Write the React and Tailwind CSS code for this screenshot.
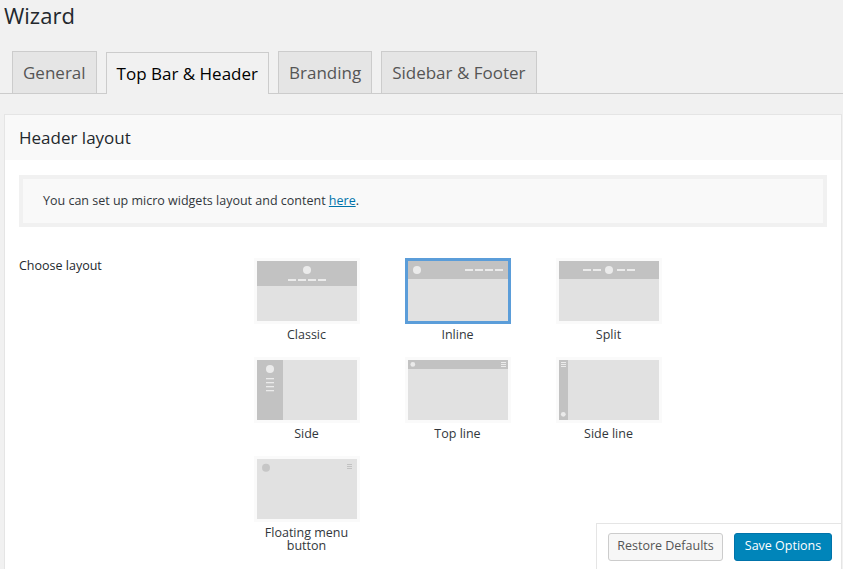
import React from "react";

const DARK = "#c2c2c2";
const LIGHT = "#e1e1e1";
const DOT = "#ebebeb";

function Dashes({ xs, y }) {
  return xs.map((x) => <rect key={x} x={x} y={y} width="8" height="2" fill={DOT} />);
}

function Hamburger({ x, y, color, w = 5 }) {
  return [0, 2, 4].map((d) => (
    <rect key={d} x={x} y={y + d} width={w} height="1" fill={color} />
  ));
}

const thumbs = {
  classic: (
    <>
      <rect x="0" y="0" width="100" height="25" fill={DARK} />
      <circle cx="50" cy="9" r="4" fill={DOT} />
      <Dashes xs={[31, 41, 51, 61]} y={18} />
    </>
  ),
  inline: (
    <>
      <rect x="0" y="0" width="100" height="18" fill={DARK} />
      <circle cx="9" cy="9" r="4" fill={DOT} />
      <Dashes xs={[57, 67, 77, 87]} y={8} />
    </>
  ),
  split: (
    <>
      <rect x="0" y="0" width="100" height="18" fill={DARK} />
      <Dashes xs={[24, 34, 58, 68]} y={8} />
      <circle cx="50" cy="9" r="4" fill={DOT} />
    </>
  ),
  side: (
    <>
      <rect x="0" y="0" width="26" height="60" fill={DARK} />
      <circle cx="13" cy="9" r="4" fill={DOT} />
      {[18, 22, 26, 30].map((y) => (
        <rect key={y} x="9" y={y} width="8" height="1.3" fill={DOT} />
      ))}
    </>
  ),
  topline: (
    <>
      <rect x="0" y="0" width="100" height="9" fill={DARK} />
      <circle cx="4.8" cy="4.4" r="2.4" fill={DOT} />
      <Hamburger x={93} y={2} color={DOT} />
    </>
  ),
  sideline: (
    <>
      <rect x="0" y="0" width="9" height="60" fill={DARK} />
      <Hamburger x={2} y={2} color={DOT} />
      <circle cx="4.3" cy="54.3" r="2.4" fill={DOT} />
    </>
  ),
  floating: (
    <>
      <circle cx="9" cy="8.7" r="4" fill="#c6c6c6" />
      <Hamburger x={90} y={5} color="#c2c2c2" />
    </>
  ),
};

function Thumb({ kind, label, selected }) {
  return (
    <div className="flex flex-col items-center">
      <div
        className={
          selected
            ? "border-[3px] border-[#5b9dd9]"
            : "border-[3px] border-[#fafafa]"
        }
      >
        <svg width="100" height="60" viewBox="0 0 100 60" className="block">
          <rect x="0" y="0" width="100" height="60" fill={LIGHT} />
          {thumbs[kind]}
        </svg>
      </div>
      <div className="mt-[4px] w-[110px] text-center text-[12.5px] leading-[13px] text-[#32373c]">
        {label}
      </div>
    </div>
  );
}

export default function App() {
  return (
    <div
      className="relative h-[569px] w-[843px] overflow-hidden bg-[#f1f1f1] text-[#23282d]"
      style={{ fontFamily: '"Open Sans", "Noto Sans", sans-serif' }}
    >
      <h1 className="pl-[4px] pt-[1px] text-[22px] leading-[29px] text-[#23282d]">Wizard</h1>

      {/* Tabs */}
      <div className="mt-[22px] flex h-[42px] items-end gap-[9px] border-b border-[#ccc] pl-[12px]">
        <div className="flex h-[42px] items-center border border-b-0 border-[#ccc] bg-[#e5e5e5] px-[10px] text-[17px] text-[#555]">
          General
        </div>
        <div className="-mb-px flex h-[42px] items-center border border-b-0 border-[#ccc] bg-[#f1f1f1] px-[10px] text-[17px] text-[#000]">
          Top Bar &amp; Header
        </div>
        <div className="flex h-[42px] items-center border border-b-0 border-[#ccc] bg-[#e5e5e5] px-[10px] text-[17px] text-[#555]">
          Branding
        </div>
        <div className="flex h-[42px] items-center border border-b-0 border-[#ccc] bg-[#e5e5e5] px-[10px] text-[17px] text-[#555]">
          Sidebar &amp; Footer
        </div>
      </div>

      {/* Panel */}
      <div className="ml-[4px] mr-[1px] mt-[20px] border border-[#e5e5e5] bg-white">
        <div className="flex h-[45px] items-center bg-[#f9f9f9] px-[14px] text-[17px] text-[#23282d]">
          Header layout
        </div>
        <div className="px-[14px] pb-[60px] pt-[15px]">
          <div className="w-[808px] border-[4px] border-[#f1f1f1] bg-[#f9f9f9] px-[20px] py-[13px] text-[12.5px] leading-[18px] text-[#32373c]">
            You can set up micro widgets layout and content{" "}
            <a href="#" className="text-[#0073aa] underline">
              here
            </a>
            .
          </div>

          <div className="mt-[31px] flex">
            <div className="w-[212px] pt-[1px] text-[12.5px] leading-[14px] text-[#23282d]">Choose layout</div>
            <div className="grid grid-cols-[151px_151px_151px] gap-y-[16px]">
              <Thumb kind="classic" label="Classic" />
              <Thumb kind="inline" label="Inline" selected />
              <Thumb kind="split" label="Split" />
              <Thumb kind="side" label="Side" />
              <Thumb kind="topline" label="Top line" />
              <Thumb kind="sideline" label="Side line" />
              <Thumb kind="floating" label={<>Floating menu<br />button</>} />
            </div>
          </div>
        </div>
      </div>

      {/* Sticky save bar */}
      <div className="absolute bottom-0 left-[596px] right-[2px] flex h-[46px] items-center gap-[11px] border-l border-t border-[#e5e5e5] bg-white pl-[11px]">
        <button className="h-[28px] w-[115px] rounded-[3px] border border-[#ccc] bg-[#f7f7f7] text-[12.5px] text-[#555]">
          Restore Defaults
        </button>
        <button className="h-[28px] w-[98px] rounded-[3px] border border-[#0073aa] bg-[#0085ba] text-[12.5px] text-white">
          Save Options
        </button>
      </div>
    </div>
  );
}
